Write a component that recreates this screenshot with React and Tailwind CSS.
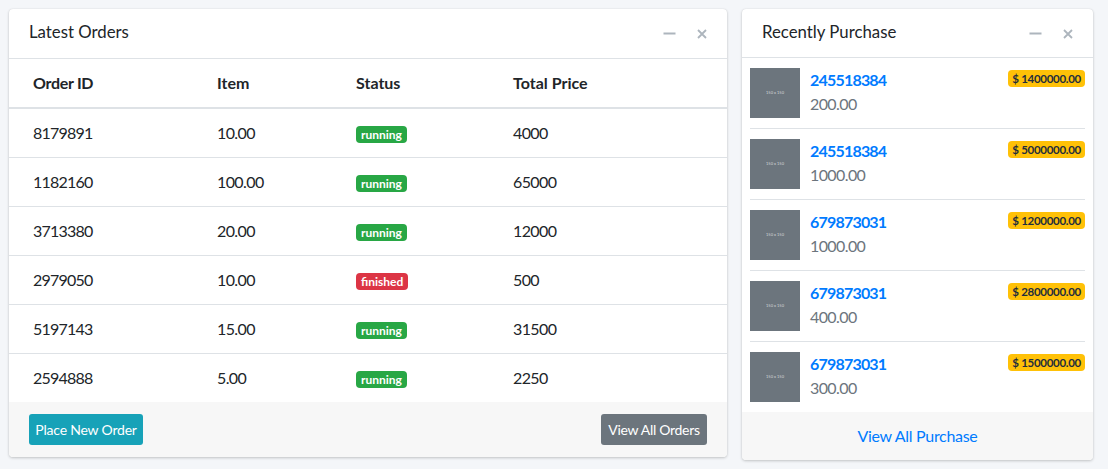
const orders = [
  { id: '8179891', item: '10.00', status: 'running', total: '4000' },
  { id: '1182160', item: '100.00', status: 'running', total: '65000' },
  { id: '3713380', item: '20.00', status: 'running', total: '12000' },
  { id: '2979050', item: '10.00', status: 'finished', total: '500' },
  { id: '5197143', item: '15.00', status: 'running', total: '31500' },
  { id: '2594888', item: '5.00', status: 'running', total: '2250' },
];

const purchases = [
  { id: '245518384', qty: '200.00', price: '$ 1400000.00' },
  { id: '245518384', qty: '1000.00', price: '$ 5000000.00' },
  { id: '679873031', qty: '1000.00', price: '$ 1200000.00' },
  { id: '679873031', qty: '400.00', price: '$ 2800000.00' },
  { id: '679873031', qty: '300.00', price: '$ 1500000.00' },
];

const CardTools = () => (
  <div className="flex items-center gap-[21px] pt-[6px] text-[#adb5bd]">
    <svg className="w-[13px] h-[13px]" viewBox="0 0 13 13" fill="none" stroke="currentColor" strokeWidth={2}>
      <path d="M0.5 6.5h12" />
    </svg>
    <svg className="w-[10px] h-[10px]" viewBox="0 0 10 10" fill="none" stroke="currentColor" strokeWidth={1.8}>
      <path d="M1 1l8 8M9 1l-8 8" />
    </svg>
  </div>
);

const CardHeader = ({ title, tall }) => (
  <div className={`${tall ? 'h-[50px]' : 'h-[49px]'} px-5 flex items-start justify-between border-b border-[#dee2e6]`}>
    <h3 className="text-[16.8px] leading-[21px] pt-[12px] text-[#212529]">{title}</h3>
    <div className="pt-[12px]">
      <CardTools />
    </div>
  </div>
);

const Badge = ({ status }) => (
  <span
    className={`inline-block rounded-[4px] px-[5px] text-[12px] leading-[17px] font-bold text-white ${
      status === 'finished' ? 'bg-[#dc3545]' : 'bg-[#28a745]'
    }`}
  >
    {status}
  </span>
);

export default function App() {
  return (
    <div
      className="min-h-[469px] bg-[#f4f6f9] pl-[9px] pr-[15px] pt-[9px] flex items-start gap-[15px] text-[16px] text-[#212529]"
      style={{ fontFamily: 'Lato, "Noto Sans", sans-serif' }}
    >
      <div className="w-[718px] bg-white rounded-[4px] shadow-[0_0_1px_rgba(0,0,0,0.125),0_1px_3px_rgba(0,0,0,0.2)] overflow-hidden">
        <CardHeader title="Latest Orders" tall />
        <table className="w-full table-fixed border-collapse">
          <colgroup>
            <col className="w-[196px]" />
            <col className="w-[139px]" />
            <col className="w-[157px]" />
            <col className="w-[226px]" />
          </colgroup>
          <thead>
            <tr className="border-b-2 border-[#dee2e6]">
              <th className="text-left font-bold leading-6 py-3 pl-6 pr-3 tracking-[-0.3px]">Order ID</th>
              <th className="text-left font-bold leading-6 py-3 px-3">Item</th>
              <th className="text-left font-bold leading-6 py-3 px-3">Status</th>
              <th className="text-left font-bold leading-6 py-3 px-3">Total Price</th>
            </tr>
          </thead>
          <tbody>
            {orders.map((o, i) => (
              <tr key={o.id} className={i > 0 ? 'border-t border-[#dee2e6]' : ''}>
                <td className="leading-6 py-3 pl-6 pr-3 tracking-[-0.8px]">{o.id}</td>
                <td className="leading-6 py-3 px-3 tracking-[-0.6px]">{o.item}</td>
                <td className="leading-6 py-3 px-3">
                  <Badge status={o.status} />
                </td>
                <td className="leading-6 py-3 px-3 tracking-[-0.6px]">{o.total}</td>
              </tr>
            ))}
          </tbody>
        </table>
        <div className="bg-[#f7f7f7] px-5 py-3 flex items-center justify-between">
          <button className="w-[114px] h-[31px] rounded-[3px] bg-[#17a2b8] text-white text-[14px] tracking-[-0.2px]">Place New Order</button>
          <button className="w-[106px] h-[31px] rounded-[3px] bg-[#6c757d] text-white text-[14px] tracking-[-0.3px]">View All Orders</button>
        </div>
      </div>

      <div className="w-[351px] bg-white rounded-[4px] shadow-[0_0_1px_rgba(0,0,0,0.125),0_1px_3px_rgba(0,0,0,0.2)] overflow-hidden">
        <CardHeader title="Recently Purchase" />
        <ul className="px-2">
          {purchases.map((p, i) => (
            <li
              key={i}
              className={`flex items-start py-[10px] ${i < purchases.length - 1 ? 'border-b border-[#dee2e6]' : ''}`}
            >
              <div className="w-[50px] h-[50px] bg-[#6c757d] flex items-center justify-center text-[4px] text-[#d5d8dc] shrink-0">
                150 x 150
              </div>
              <div className="ml-[10px] flex-1 min-w-0">
                <div className="flex items-start justify-between">
                  <a className="font-bold text-[#007bff] leading-6 tracking-[-0.8px]">{p.id}</a>
                  <span className="mt-[2px] rounded-[4px] bg-[#ffc107] px-[4px] text-[11.5px] leading-[17px] font-bold text-[#1f2d3d] tracking-[-0.3px]">
                    {p.price}
                  </span>
                </div>
                <span className="block text-[#6c757d] leading-6 tracking-[-0.6px]">{p.qty}</span>
              </div>
            </li>
          ))}
        </ul>
        <div className="bg-[#f7f7f7] px-5 py-3 text-center leading-6">
          <a className="text-[#007bff] tracking-[-0.3px]">View All Purchase</a>
        </div>
      </div>
    </div>
  );
}
